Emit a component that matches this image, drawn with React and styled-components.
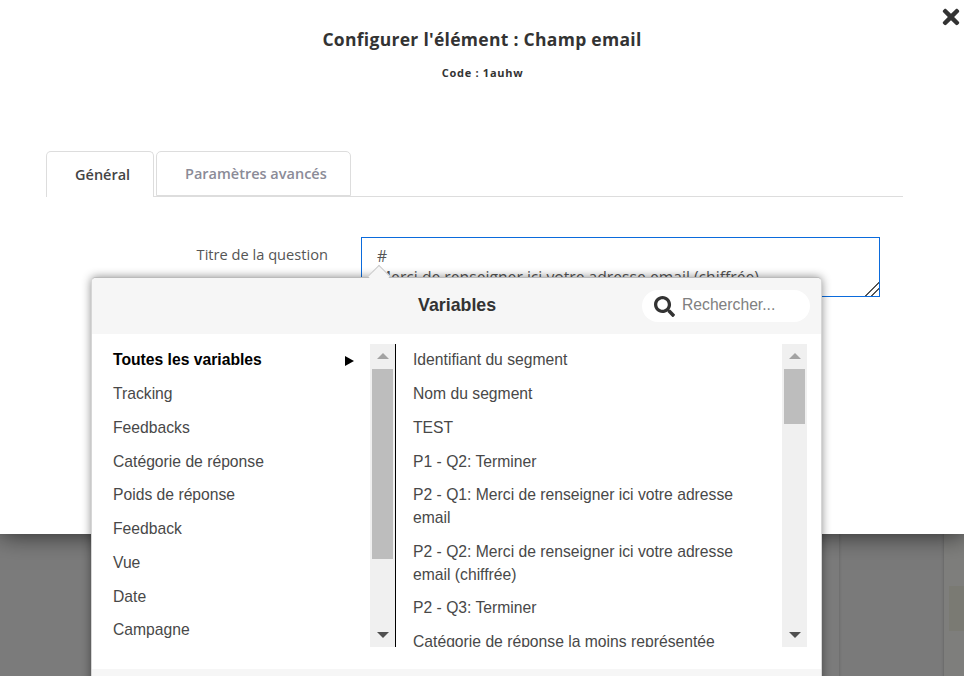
import React from "react";
import styled, { createGlobalStyle } from "styled-components";
import { FaTimes, FaSearch } from "react-icons/fa";

const Global = createGlobalStyle`
  html, body { margin: 0; padding: 0; background: #7a7a7a; }
  * { box-sizing: border-box; }
`;

const Page = styled.div`
  position: relative;
  width: 964px;
  height: 676px;
  overflow: hidden;
  background: #7b7b7b;
  font-family: "Open Sans", sans-serif;
`;

const Modal = styled.section`
  position: relative;
  z-index: 2;
  height: 534px;
  background: #fff;
  box-shadow: 0 0 24px rgba(0, 0, 0, 0.7);
  padding: 28px 61px 0 46px;
`;

const Backdrop = styled.div`
  display: flex;
  height: 142px;
  padding-left: 839px;
`;

const BackdropColumn = styled.div`
  width: 105px;
  border-left: 1px solid #707070;
  border-right: 1px solid #6e6e6e;
  box-shadow: inset 2px 0 2px -1px rgba(0, 0, 0, 0.05), inset -2px 0 2px -1px rgba(0, 0, 0, 0.05);
  background: #7a7a7a;
`;

const BackdropTail = styled.div`
  flex: 1;
  padding-top: 52px;
  background: #7e7e7c;
`;

const BackdropBlock = styled.div`
  height: 45px;
  margin-left: 5px;
  background: #7a7a73;
`;

const Close = styled.button`
  position: absolute;
  top: 6px;
  right: 2px;
  width: 22px;
  height: 22px;
  padding: 0;
  border: 0;
  background: none;
  color: #333;
  font-size: 24px;
  line-height: 22px;
  display: flex;
  align-items: center;
  justify-content: center;
`;

const Title = styled.h1`
  margin: 0;
  padding-left: 15px;
  text-align: center;
  font-size: 17.5px;
  line-height: 22px;
  font-weight: 700;
  color: #333;
  letter-spacing: 0.29px;
`;

const Code = styled.p`
  margin: 15px 0 0;
  padding-left: 16px;
  text-align: center;
  font-size: 11px;
  line-height: 15px;
  font-weight: 700;
  color: #333;
  letter-spacing: 0.72px;
`;

const Tabs = styled.nav`
  display: flex;
  gap: 2px;
  height: 46px;
  margin-top: 71px;
  border-bottom: 1px solid #ddd;
`;

const Tab = styled.div`
  height: ${(p) => (p.$active ? "46px" : "45px")};
  width: ${(p) => p.$width}px;
  display: flex;
  align-items: center;
  padding-left: 28px;
  background: #fff;
  border: 1px solid #ddd;
  border-bottom: ${(p) => (p.$active ? "0" : "1px solid #ddd")};
  border-radius: 5px 5px 0 0;
  font-size: 14.5px;
  font-weight: 600;
  color: ${(p) => (p.$active ? "#444" : "#8b8b97")};
`;

const Field = styled.div`
  display: flex;
  margin-top: 40px;
`;

const Label = styled.label`
  width: 282px;
  padding-top: 7px;
  text-align: right;
  font-size: 14.65px;
  line-height: 20px;
  color: #555;
`;

const Area = styled.textarea`
  display: block;
  width: 519px;
  height: 60px;
  margin-left: 33px;
  padding: 8px 15px;
  border: 1px solid #0b6bdc;
  outline: 0;
  overflow: hidden;
  resize: both;
  font-family: "Open Sans", sans-serif;
  font-size: 15.7px;
  line-height: 21px;
  color: #555;

  &::-webkit-resizer {
    background:
      linear-gradient(135deg, transparent 52%, #555 52%, #555 58%, transparent 58%) 0 0 / 15px 15px no-repeat,
      linear-gradient(135deg, transparent 72%, #555 72%, #555 78%, transparent 78%) 0 0 / 15px 15px no-repeat;
  }
`;

const Popup = styled.div`
  position: absolute;
  z-index: 3;
  left: 91px;
  top: 277px;
  width: 731px;
  height: 420px;
  background: #fff;
  border: 1px solid #d6d6d6;
  border-top-color: #bbb;
  border-bottom: 0;
  border-radius: 5px 5px 0 0;
  box-shadow: 0 0 10px rgba(0, 0, 0, 0.45);
  font-family: "Liberation Sans", Arial, sans-serif;
  color: #444;

  &::before {
    content: "";
    position: absolute;
    left: 279px;
    top: -10px;
    width: 15px;
    height: 15px;
    background: #f6f6f6;
    transform: rotate(45deg);
    border-top: 1px solid #ccc;
    border-left: 1px solid #ccc;
  }
`;

const PopupHeader = styled.header`
  position: relative;
  height: 56px;
  display: flex;
  align-items: center;
  background: #f6f6f6;
  border-radius: 4px 4px 0 0;
  padding: 0 11px 0 326px;
`;

const PopupTitle = styled.h2`
  flex: 1;
  margin: 0;
  padding-bottom: 2px;
  font-size: 17.8px;
  line-height: 22px;
  font-weight: 700;
  color: #333;
`;

const Search = styled.div`
  width: 168px;
  height: 32px;
  display: flex;
  align-items: center;
  gap: 7px;
  padding: 0 12px;
  background: #fff;
  border-radius: 16px;
  color: #333;
  font-size: 21px;
`;

const SearchInput = styled.input`
  width: 110px;
  height: 24px;
  padding: 0 0 2px;
  border: 0;
  outline: 0;
  background: none;
  font-family: "Liberation Sans", Arial, sans-serif;
  font-size: 15.7px;
  color: #444;
  &::placeholder { color: #808080; opacity: 1; }
`;

const PopupBody = styled.div`
  height: 335px;
  padding: 10px 14px 22px 0;
  display: flex;
`;

const Menu = styled.ul`
  flex: ${(p) => (p.$main ? "1" : "0 0 278px")};
  min-width: 0;
  height: 303px;
  margin: 0;
  padding: 0.3px 0 0 ${(p) => (p.$main ? "17px" : "21px")};
  padding-right: ${(p) => (p.$main ? "20px" : "16px")};
  list-style: none;
  overflow: hidden;
  ${(p) => p.$main && "border-left: 1px solid #000;"}
`;

const Item = styled.li`
  display: flex;
  align-items: center;
  justify-content: space-between;
  padding: 5px 0 6px;
  font-size: 15.7px;
  line-height: 22.75px;
  font-weight: ${(p) => (p.$active ? 700 : 400)};
  color: ${(p) => (p.$active ? "#000" : "#484848")};
`;

const Pointer = styled.span`
  width: 0;
  height: 0;
  border-left: 9px solid #000;
  border-top: 5px solid transparent;
  border-bottom: 5px solid transparent;
`;

const Scrollbar = styled.div`
  flex: 0 0 ${(p) => p.$width}px;
  height: 303px;
  display: flex;
  flex-direction: column;
  align-items: center;
  background: #f0f0f0;
`;

const ArrowBox = styled.div`
  flex: 0 0 25px;
  width: 100%;
  display: flex;
  align-items: ${(p) => (p.$down ? "flex-end" : "flex-start")};
  justify-content: center;
  padding: 9px 0;
`;

const Arrow = styled.span`
  width: 0;
  height: 0;
  border-left: 6px solid transparent;
  border-right: 6px solid transparent;
  ${(p) =>
    p.$down
      ? "border-top: 6px solid #505050;"
      : "border-bottom: 6px solid #a3a3a3;"}
`;

const Track = styled.div`
  flex: 1;
  width: 100%;
  padding: 0 2px;
`;

const Thumb = styled.div`
  height: ${(p) => p.$height}px;
  background: #bdbdbd;
`;

const PopupFooter = styled.footer`
  height: 28px;
  background: #f6f6f6;
`;

const groups = [
  "Tracking",
  "Feedbacks",
  "Catégorie de réponse",
  "Poids de réponse",
  "Feedback",
  "Vue",
  "Date",
  "Campagne",
];

const variables = [
  "Identifiant du segment",
  "Nom du segment",
  "TEST",
  "P1 - Q2: Terminer",
  "P2 - Q1: Merci de renseigner ici votre adresse email",
  "P2 - Q2: Merci de renseigner ici votre adresse email (chiffrée)",
  "P2 - Q3: Terminer",
  "Catégorie de réponse la moins représentée",
];

function Bar({ thumb, width }) {
  return (
    <Scrollbar $width={width}>
      <ArrowBox><Arrow /></ArrowBox>
      <Track><Thumb $height={thumb} /></Track>
      <ArrowBox $down><Arrow $down /></ArrowBox>
    </Scrollbar>
  );
}

export default function App() {
  return (
    <Page>
      <Global />
      <Modal>
        <Close aria-label="Fermer"><FaTimes /></Close>
        <Title>Configurer l'élément : Champ email</Title>
        <Code>Code : 1auhw</Code>
        <Tabs>
          <Tab $active $width={108}>Général</Tab>
          <Tab $width={195}>Paramètres avancés</Tab>
        </Tabs>
        <Field>
          <Label>Titre de la question</Label>
          <Area
            readOnly
            defaultValue={"#\nMerci de renseigner ici votre adresse email (chiffrée)"}
          />
        </Field>
      </Modal>
      <Backdrop>
        <BackdropColumn />
        <BackdropTail><BackdropBlock /></BackdropTail>
      </Backdrop>
      <Popup>
        <PopupHeader>
          <PopupTitle>Variables</PopupTitle>
          <Search>
            <FaSearch />
            <SearchInput placeholder="Rechercher..." />
          </Search>
        </PopupHeader>
        <PopupBody>
          <Menu>
            <Item $active>Toutes les variables<Pointer /></Item>
            {groups.map((g) => <Item key={g}>{g}</Item>)}
          </Menu>
          <Bar thumb={190} width={25} />
          <Menu $main>
            {variables.map((v) => <Item key={v}>{v}</Item>)}
          </Menu>
          <Bar thumb={55} width={25} />
        </PopupBody>
        <PopupFooter />
      </Popup>
    </Page>
  );
}
